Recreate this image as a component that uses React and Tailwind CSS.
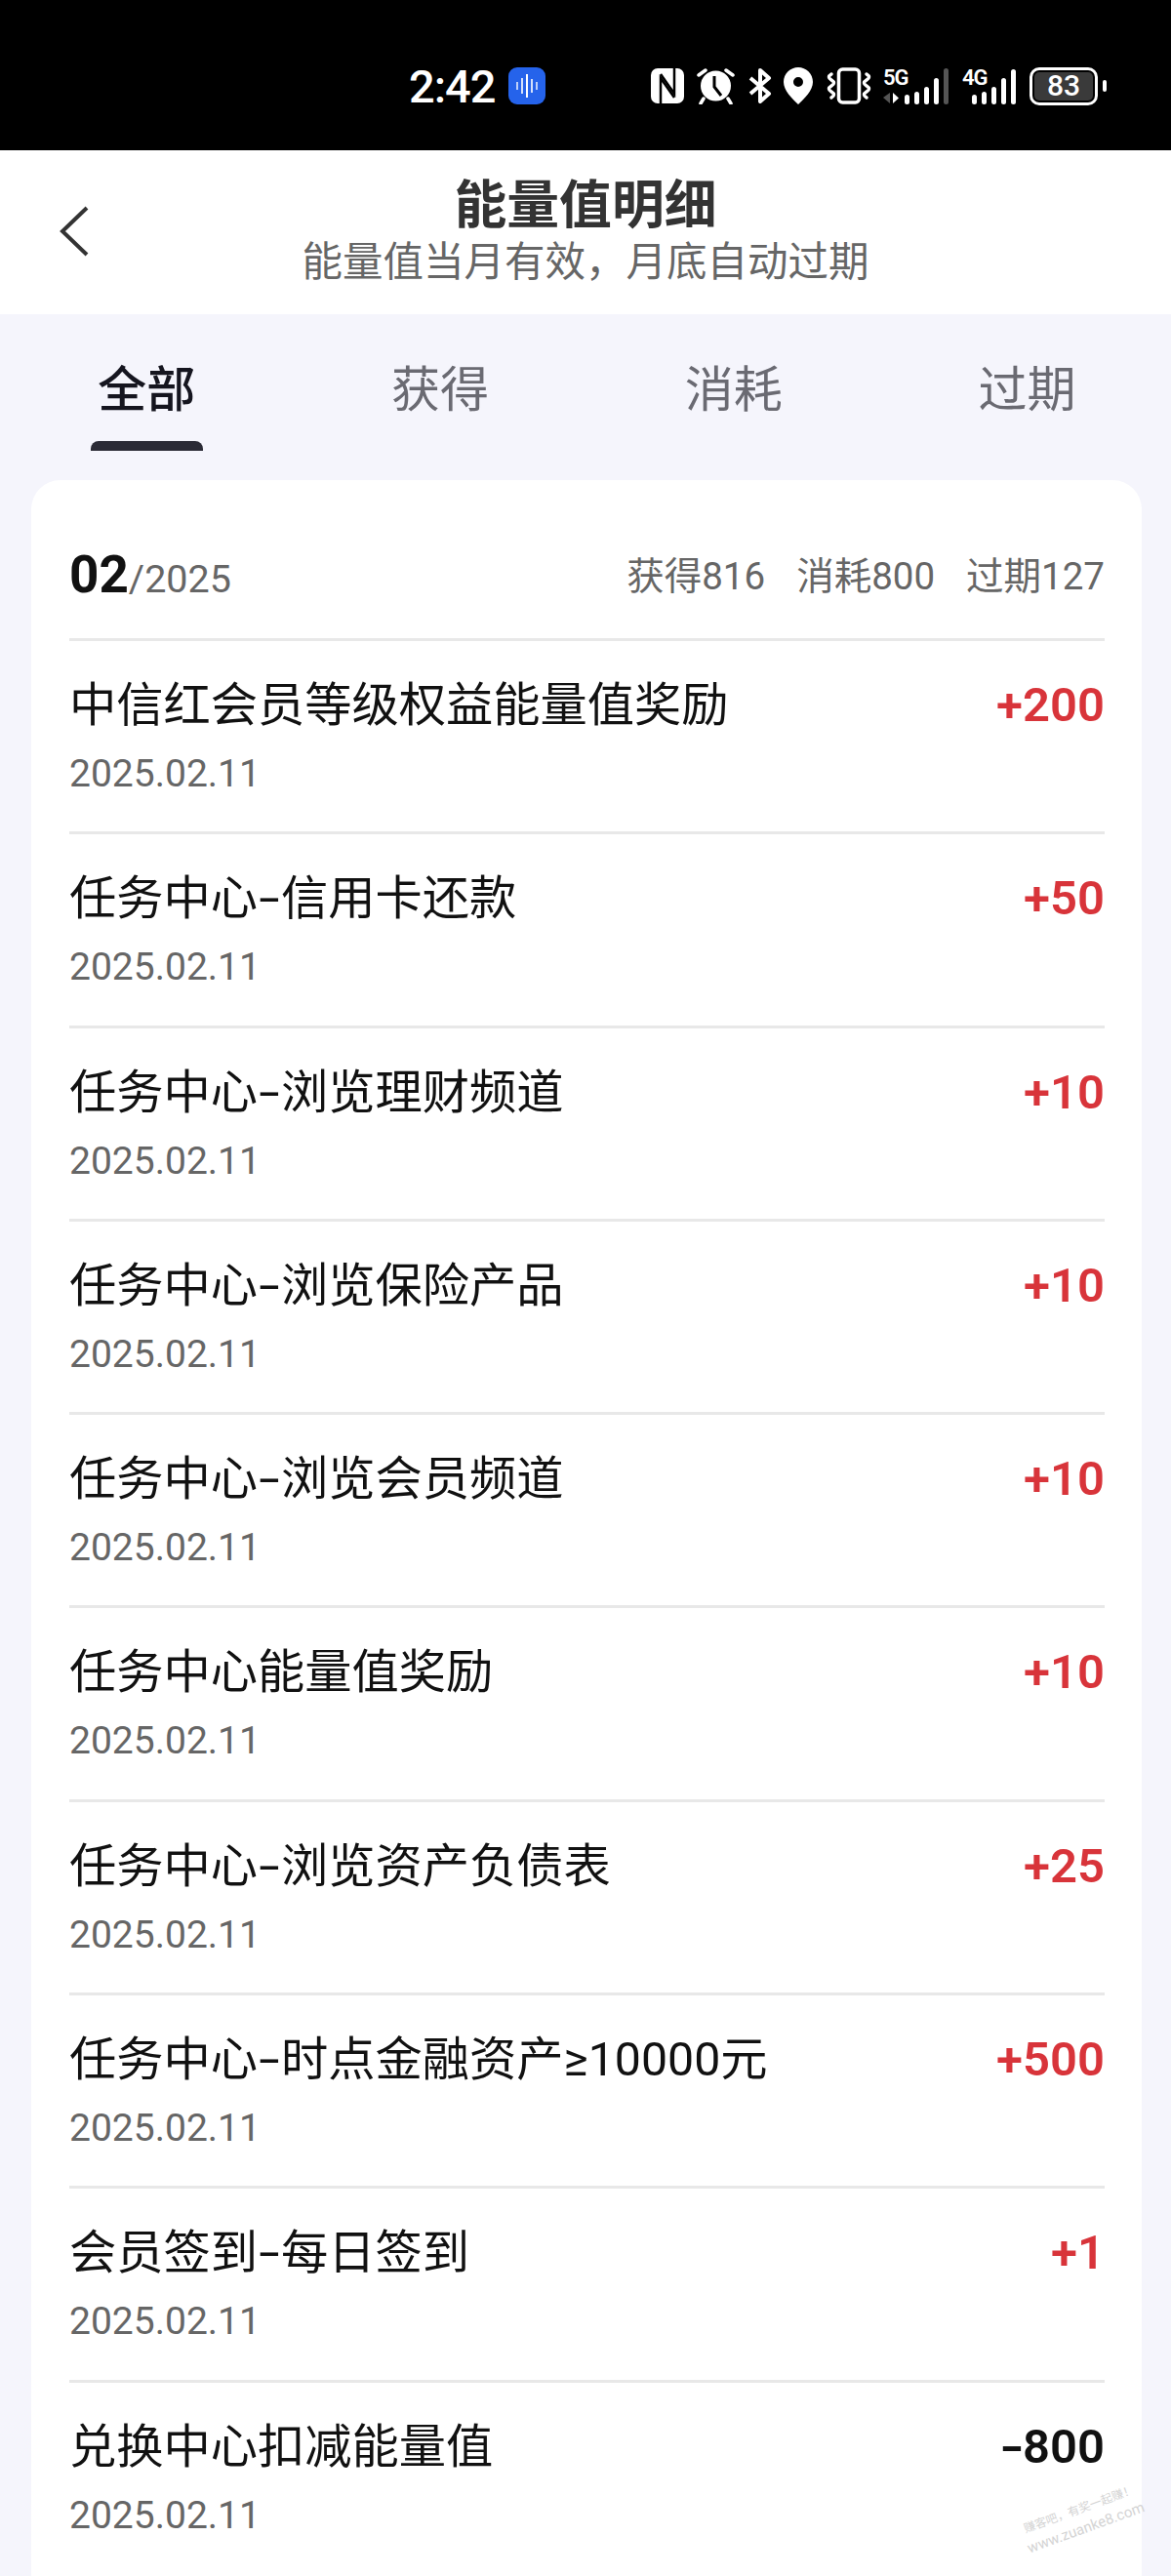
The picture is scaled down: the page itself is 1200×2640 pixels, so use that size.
import React from 'react';

const FONT = 'font-[Roboto,"Noto_Sans_CJK_SC",sans-serif]';

const rows = [
    { title: ['中信红会员等级权益能量值奖励'], amount: '+200' },
    { title: ['任务中心', '信用卡还款'], amount: '+50' },
    { title: ['任务中心', '浏览理财频道'], amount: '+10' },
    { title: ['任务中心', '浏览保险产品'], amount: '+10' },
    { title: ['任务中心', '浏览会员频道'], amount: '+10' },
    { title: ['任务中心能量值奖励'], amount: '+10' },
    { title: ['任务中心', '浏览资产负债表'], amount: '+25' },
    { title: ['任务中心', '时点金融资产≥10000元'], amount: '+500' },
    { title: ['会员签到', '每日签到'], amount: '+1' },
    { title: ['兑换中心扣减能量值'], amount: '-800' },
];

const tabs = ['全部', '获得', '消耗', '过期'];

const Bars = ({ heights, dim }) => (
    <div className="flex items-end gap-[5px]">
        {heights.map((h, i) => (
            <div
                key={i}
                className={`w-[5px] rounded-full ${dim && i === heights.length - 1 ? 'bg-[#555]' : 'bg-white'}`}
                style={{ height: h }}
            />
        ))}
    </div>
);

const StatusBar = () => (
    <div className="flex h-[154px] items-center bg-black pl-[420px] pt-[22px] text-white">
        <span className="-ml-[1px] w-[102px] text-[47px] leading-none font-medium tracking-[-1px]">2:42</span>
        <div className="flex h-[38px] w-[38px] items-center justify-center gap-[3px] rounded-[9px] bg-[#2563eb]">
            <i className="h-[8px] w-[2px] bg-white/70" />
            <i className="h-[16px] w-[2px] bg-white/80" />
            <i className="h-[24px] w-[2px] bg-white" />
            <i className="h-[14px] w-[2px] bg-white/80" />
            <i className="h-[8px] w-[2px] bg-white/70" />
        </div>

        {/* nfc */}
        <svg className="ml-[108px]" width="34" height="36" viewBox="0 0 34 36" fill="none">
            <rect width="34" height="36" rx="7" fill="#fff" />
            <path d="M10 36V10l14 20" stroke="#000" strokeWidth="2.500" />
            <path d="M24 0v26L10 6" stroke="#000" strokeWidth="2.500" />
        </svg>

        {/* alarm */}
        <svg className="ml-[13px]" width="39" height="38" viewBox="0 0 39 38" fill="none">
            <circle cx="19.500" cy="19" r="15.500" fill="#fff" />
            <path d="M18 9v11l7 9" stroke="#000" strokeWidth="3" />
            <path d="M2 8l7-5M37 8l-7-5M7 32l-3 5M32 32l3 5" stroke="#fff" strokeWidth="3.500" strokeLinecap="round" />
        </svg>

        {/* bluetooth */}
        <svg className="ml-[14px]" width="24" height="36" viewBox="0 0 24 36" fill="none">
            <path d="M2 10l19 16-9 8V2l9 8L2 26" stroke="#fff" strokeWidth="4" strokeLinejoin="round" />
        </svg>

        {/* location */}
        <svg className="ml-[12px]" width="30" height="38" viewBox="0 0 30 38">
            <path
                fillRule="evenodd"
                fill="#fff"
                d="M15 0C7 0 0 6.500 0 15c0 9 9 17 15 23 6-6 15-14 15-23C30 6.500 23 0 15 0zm0 10a5 5 0 110 10 5 5 0 010-10z"
            />
        </svg>

        {/* vibrate */}
        <svg className="ml-[14px]" width="46" height="38" viewBox="0 0 46 38" fill="none">
            <rect x="12.500" y="2" width="21" height="34" rx="4" stroke="#fff" strokeWidth="3.500" />
            <path d="M5 7q-5 3 0 6t0 6 0 6 0 6" stroke="#fff" strokeWidth="3.500" strokeLinecap="round" />
            <path d="M41 7q5 3 0 6t0 6 0 6 0 6" stroke="#fff" strokeWidth="3.500" strokeLinecap="round" />
        </svg>

        {/* 5G signal */}
        <div className="relative ml-[12px] flex h-[38px] w-[67px] items-end justify-end">
            <span className="absolute left-0 top-0 text-[22px] leading-[22px] font-semibold tracking-[-1px]">5G</span>
            <svg className="absolute bottom-[1px] left-0" width="16" height="11" viewBox="0 0 16 11">
                <path d="M0 5l7-5v11z" fill="#555" />
                <path d="M10 0l6 5.500-6 5.500z" fill="#fff" />
            </svg>
            <Bars heights={[10, 13, 18, 27, 37]} dim />
        </div>

        {/* 4G signal */}
        <div className="relative ml-[14px] flex h-[38px] w-[55px] items-end justify-end">
            <span className="absolute left-0 top-0 text-[22px] leading-[22px] font-semibold tracking-[-1px]">4G</span>
            <Bars heights={[10, 13, 18, 27, 36]} />
        </div>

        {/* battery */}
        <div className="ml-[14px] flex h-[39px] w-[70px] items-center justify-center rounded-[10px] border-[3px] border-white p-[2px]">
            <div className="flex h-full w-full items-center justify-center rounded-[5px] bg-[#3a3a3a] text-[30px] leading-none font-medium">83</div>
        </div>
        <div className="ml-[5px] h-[12px] w-[4px] rounded-full bg-white" />
    </div>
);

const Header = () => (
    <div className="grid h-[168px] grid-cols-[1fr_auto_1fr] items-start bg-white">
        <svg className="ml-[60px] mt-[57px]" width="32" height="52" viewBox="0 0 32 52" fill="none">
            <path d="M29 2L4 26l25 24" stroke="#333" strokeWidth="4" />
        </svg>
        <div className="flex flex-col items-center pt-[27px]">
            <div className="text-[53.800px] leading-[60px] font-bold text-[#333]">能量值明细</div>
            <div className="mt-[3px] text-[41.500px] leading-[50px] text-[#666]">能量值当月有效，月底自动过期</div>
        </div>
    </div>
);

const Tabs = () => (
    <div className="grid h-[170px] grid-cols-[repeat(4,300.7px)] bg-[#f5f5fc] pt-[46px]">
        {tabs.map((tab, i) => (
            <div key={tab} className="flex flex-col items-center">
                <span className={`text-[50px] leading-[64px] ${i === 0 ? 'font-medium text-[#15151f]' : 'text-[#6a6a72]'}`}>{tab}</span>
                {i === 0 && <div className="mt-[20px] h-[10px] w-[115px] rounded-t-[8px] bg-[#2b2b36]" />}
            </div>
        ))}
    </div>
);

const Row = ({ title, amount }) => (
    <div className="h-[198.3px] border-t-[3px] border-[#e8e8e8] pt-[36px]">
        <div className="flex items-center justify-between">
            <span className="text-[48.250px] leading-[60px] text-[#111]">
                {title[0]}
                {/* the app draws its hyphen much longer than the font does */}
                {title[1] && <span className="inline-block w-[24px] scale-x-[1.6] text-center">-</span>}
                {title[1]}
            </span>
            <span className={`text-[49px] leading-[60px] font-semibold ${amount.startsWith('-') ? 'text-[#111]' : 'text-[#d8343a]'}`}>
                {amount.startsWith('-') ? (
                    <>
                        <span className="inline-block w-[22px] scale-x-[1.4] text-center">-</span>
                        {amount.slice(1)}
                    </>
                ) : (
                    amount
                )}
            </span>
        </div>
        <div className="mt-[15px] text-[39px] leading-[50px] text-[#666]">2025.02.11</div>
    </div>
);

const App = () => (
    <div className={`relative h-[2640px] w-[1200px] overflow-hidden bg-[#f5f5fc] ${FONT}`}>
        <StatusBar />
        <Header />
        <Tabs />

        {/* --- CARD --- */}
        <div className="ml-[32px] mr-[30px] h-[2200px] rounded-t-[30px] bg-white pl-[39px] pr-[38px]">
            <div className="flex h-[162px] items-center justify-between pt-[32px]">
                <div className="flex items-baseline">
                    <span className="text-[53px] leading-none font-bold text-[#111]">02</span>
                    <span className="text-[39.500px] leading-none text-[#666]">/2025</span>
                </div>
                <div className="mt-[5px] flex gap-[32px] text-[38.500px] leading-none text-[#666]">
                    <span>获得816</span>
                    <span>消耗800</span>
                    <span>过期127</span>
                </div>
            </div>
            {rows.map((row, i) => (
                <Row key={i} title={row.title} amount={row.amount} />
            ))}
        </div>

        {/* --- WATERMARK --- */}
        <div className="absolute right-[28px] top-[2560px] -rotate-[20deg] text-center leading-[19px] text-[#d4d4d4]">
            <span className="text-[12px]">赚客吧，有奖一起赚！</span>
            <br />
            <span className="text-[15px]">www.zuanke8.com</span>
        </div>
    </div>
);

export default App;
